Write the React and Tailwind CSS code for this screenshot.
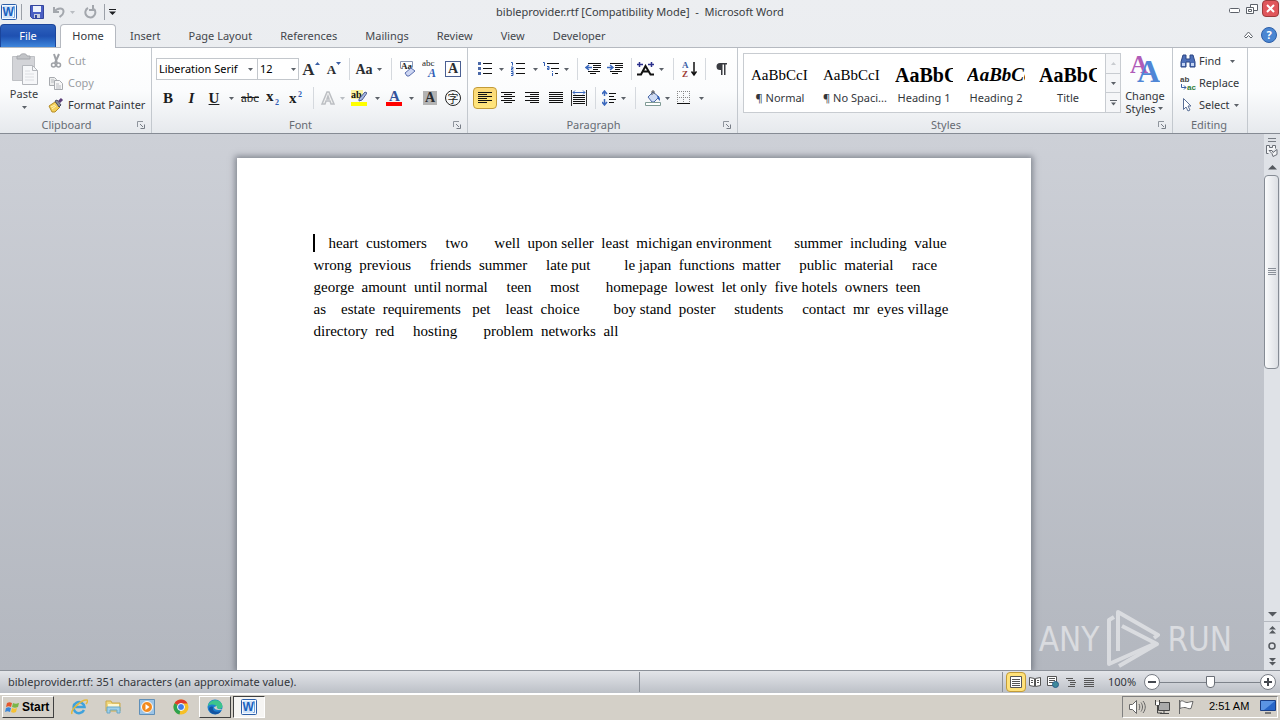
import { clsx } from 'clsx';

const LINES = [
  '    heart  customers     two       well  upon seller  least  michigan environment      summer  including  value',
  'wrong  previous     friends  summer     late put         le japan  functions  matter     public  material     race',
  'george  amount  until normal     teen     most       homepage  lowest  let only  five hotels  owners  teen',
  'as    estate  requirements   pet    least  choice         boy stand  poster     students     contact  mr  eyes village',
  'directory  red     hosting       problem  networks  all',
];

const TABS = ['Insert', 'Page Layout', 'References', 'Mailings', 'Review', 'View', 'Developer'];

const STYLES = [
  { name: '¶ Normal', sample: 'AaBbCcI', look: 'text-[15px]' },
  { name: '¶ No Spaci...', sample: 'AaBbCcI', look: 'text-[15px]' },
  { name: 'Heading 1', sample: 'AaBbC', look: 'text-[20px] font-bold' },
  { name: 'Heading 2', sample: 'AaBbCc', look: 'text-[19px] font-bold italic' },
  { name: 'Title', sample: 'AaBbC', look: 'text-[20px] font-bold' },
];

const SERIF = "font-['Liberation_Serif',serif]";

// ---- small building blocks ----

const Svg = ({ w = 16, h = 16, children, className }) => (
  <svg width={w} height={h} viewBox={`0 0 ${w} ${h}`} fill="none" className={clsx('shrink-0', className)} aria-hidden="true">
    {children}
  </svg>
);

const Glyph = ({ x, y, size, fill, italic, plain, sans, children }) => (
  <text
    x={x}
    y={y}
    fontSize={size}
    fontFamily={sans ? 'Liberation Sans' : 'Liberation Serif'}
    fontWeight={plain ? 'normal' : 'bold'}
    fontStyle={italic ? 'italic' : 'normal'}
    fill={fill}
  >
    {children}
  </text>
);

const Caret = ({ className = 'w-2', faded }) => (
  <span className={clsx('flex shrink-0 justify-center', className)}>
    <Svg w={5} h={3}><path d="M0 0h5L2.5 3z" fill={faded ? '#b9bdc2' : '#5c6168'} /></Svg>
  </span>
);

const Sep = ({ className = 'w-2' }) => (
  <span className={clsx('flex h-[22px] shrink-0 justify-center', className)}>
    <span className="w-px bg-[#d5d9de]" />
  </span>
);

const Tool = ({ label, className, children }) => (
  <button type="button" aria-label={label} className={clsx('flex h-[22px] shrink-0 items-center justify-center', className)}>
    {children}
  </button>
);

const Group = ({ name, launcher, className, children }) => (
  <section className={clsx('flex shrink-0 flex-col border-r border-[#c3c8ce]', className)}>
    <div className="h-[69px]">{children}</div>
    <div className="flex h-4 items-center pr-0.5">
      <h2 className="flex-1 text-center text-[#666b73]">{name}</h2>
      {launcher && (
        <button type="button" aria-label={`${name} options`} className="flex p-1">
          <Svg w={8} h={8}>
            <path d="M.5 6V.5H6" stroke="#8f959d" />
            <path d="M3 3l3 3M7.5 3.5v4h-4" stroke="#777d86" />
          </Svg>
        </button>
      )}
    </div>
  </section>
);

const WordIcon = () => (
  <Svg>
    <rect x=".5" y=".5" width="15" height="15" rx="1" fill="#f4f9ff" stroke="#2b5ea8" />
    <path d="M2 2h10v12H2z" fill="#cfe2f8" />
    <path d="M12 2.500h1.500v11H12" stroke="#7aa3d8" />
    <Glyph x="1.500" y="12" size="12" fill="#1b62c0" sans>W</Glyph>
  </Svg>
);

// ---- title bar and tabs ----

const TitleBar = () => (
  <header className="relative flex h-6 items-center justify-between">
    <div className="flex items-center pl-px">
      <WordIcon />
      <span className="mx-1 h-4 w-px bg-[#9ba0a8]" />
      <button type="button" aria-label="Save" className="ml-1 flex">
        <Svg w={14} h={14}>
          <path d="M.5.5h13v13h-11l-2-2z" fill="#4a5fc4" stroke="#34459c" />
          <path d="M3 1h8v6H3z" fill="#eef2fb" />
          <path d="M4 9h6v4H4z" fill="#c8cede" />
          <path d="M5 10h2v3H5z" fill="#34459c" />
        </Svg>
      </button>
      <button type="button" aria-label="Undo" className="ml-2 flex">
        <Svg w={14} h={14}>
          <path d="M2 2v5h5" stroke="#a3a7ad" strokeWidth="2" />
          <path d="M2.500 6.500C5 3 12 2 11.500 7c-.3 3-2.500 4-4 5" stroke="#a3a7ad" strokeWidth="2" />
        </Svg>
      </button>
      <Caret className="w-3" faded />
      <button type="button" aria-label="Redo" className="ml-1.5 flex">
        <Svg w={14} h={14}>
          <path d="M4 3a5 5 0 1 0 6 1" stroke="#a3a7ad" strokeWidth="2" />
          <path d="M9 0v5H5" stroke="#a3a7ad" strokeWidth="2" />
        </Svg>
      </button>
      <span className="ml-1.5 h-4 w-px bg-[#9ba0a8]" />
      <button type="button" aria-label="Customize toolbar" className="ml-1 flex">
        <Svg w={7} h={6}><path d="M0 0h7v1H0zM0 2.500h7L3.500 6z" fill="#1d1f22" /></Svg>
      </button>
    </div>
    <h1 className="pointer-events-none absolute inset-x-0 text-center whitespace-pre text-[#3a3d42]">
      {'bibleprovider.rtf [Compatibility Mode]  -  Microsoft Word'}
    </h1>
    <div className="flex items-center gap-1.5 self-start pr-px">
      <button type="button" aria-label="Minimize" className="flex">
        <Svg w={11} h={16}><rect x=".5" y="7.500" width="10" height="4" rx="1" fill="#fff" stroke="#5d626a" /></Svg>
      </button>
      <button type="button" aria-label="Restore" className="flex">
        <Svg w={12} h={16}>
          <path d="M4.500 6V3.500h7v6H8" fill="#fff" stroke="#5d626a" />
          <path d="M.5 6.500h7v6h-7z" fill="#fff" stroke="#5d626a" />
          <path d="M2.500 8.500h3v2h-3z" stroke="#5d626a" />
        </Svg>
      </button>
      <button type="button" aria-label="Close" className="-ml-0.5 flex h-[17px] w-[17px] items-center justify-center rounded-sm border border-[#9c3a3c] bg-[#e0565b]">
        <Svg w={9} h={9}><path d="M1 1l7 7M8 1L1 8" stroke="#fff" strokeWidth="2" /></Svg>
      </button>
    </div>
  </header>
);

const TabStrip = () => (
  <nav className="flex h-6 items-end border-b border-[#b5b9c0]">
    <button type="button" className="h-[23px] w-14 rounded-t-sm border border-b-0 border-[#1b459b] bg-linear-to-b from-[#2f62bd] via-[#1e50b1] to-[#3f86dc] text-white">File</button>
    <button type="button" className="z-10 -mb-px ml-1 h-6 w-14 rounded-t-sm border border-b-0 border-[#b5b9c0] bg-white text-[#33363b]">Home</button>
    {TABS.map((tab) => (
      <button key={tab} type="button" className="h-[23px] px-[14px] pt-0.5 text-[#44474d]">{tab}</button>
    ))}
    <span className="flex-1" />
    <button type="button" aria-label="Collapse ribbon" className="mb-2 flex">
      <Svg w={9} h={8}><path d="M.5 5.500l4-4.500 4 4.500-1.500 1.500-2.500-2.500L2 7z" fill="#fff" stroke="#5d626a" /></Svg>
    </button>
    <button type="button" aria-label="Help" className="mr-[3px] mb-1 ml-2 flex h-4 w-4 items-center justify-center rounded-full border border-[#2e5fa8] bg-[#4a86d2] font-bold text-white">?</button>
  </nav>
);

// ---- ribbon groups ----

const Clipboard = () => (
  <Group name="Clipboard" launcher className="w-[152px]">
    <div className="flex pt-0.5">
      <button type="button" className="flex w-12 flex-col items-center pt-0.5 text-[#3a3d42]">
        <Svg w={30} h={34}>
          <path d="M3.500 4.500h22v24h-22z" fill="#d3d4d8" stroke="#bfc1c5" />
          <path d="M8 7V4h3c0-3 7-3 7 0h3v3z" fill="#c2c4c8" stroke="#a5a7ac" />
          <path d="M13.500 13.500h10l5 5v14h-15z" fill="#f6f7f9" stroke="#b4b7bc" />
          <path d="M23.500 13.500v5h5" stroke="#b4b7bc" />
          <path d="M16 19h5M16 22h9M16 25h9M16 28h9" stroke="#dcdee2" />
        </Svg>
        <span className="h-4 leading-4">Paste</span>
        <Caret className="mt-1 w-2" />
      </button>
      <div className="flex flex-col text-[#9a9da2]">
        <button type="button" className="flex h-[22px] items-center gap-1">
          <Svg>
            <path d="M6 1l3 9M11 1l-4 9" stroke="#9ea1a6" strokeWidth="2" />
            <circle cx="5.500" cy="12" r="2" stroke="#9ea1a6" strokeWidth="1.500" />
            <circle cx="10.500" cy="12" r="2" stroke="#9ea1a6" strokeWidth="1.500" />
          </Svg>
          Cut
        </button>
        <button type="button" className="flex h-[22px] items-center gap-1">
          <Svg>
            <path d="M1.500 2.500h5l2 2v6h-7z" fill="#eceded" stroke="#a7aaaf" />
            <path d="M6.500 5.500h5l3 3v6h-8z" fill="#f7f7f8" stroke="#a7aaaf" />
            <path d="M3 5h3M3 7h3M8 9h3M8 11h5M8 13h5" stroke="#b7babf" />
          </Svg>
          Copy
        </button>
        <button type="button" className="flex h-[22px] items-center gap-1 text-[#33363b]">
          <Svg>
            <path d="M1 9l6-4 5 5-5 5H4z" fill="#f3cf58" stroke="#b58d28" />
            <path d="M3 10l4-2M4 12l4-3" stroke="#fff3b8" />
            <path d="M7 4l2-1 4 5-2 2z" fill="#8b8fa0" stroke="#4b4f63" />
            <path d="M11 5l3-3" stroke="#5b3e78" strokeWidth="3" />
          </Svg>
          Format Painter
        </button>
      </div>
    </div>
  </Group>
);

const LetterA = ({ size, className }) => (
  <span className={clsx(SERIF, 'leading-none font-bold text-[#2b2d31]', size, className)}>A</span>
);

const Font = () => (
  <Group name="Font" launcher className="w-[316px]">
    <div className="flex flex-col gap-[7px] pt-[10px] pl-1">
      <div className="flex items-center">
        <label className="relative flex items-center">
          <span className="sr-only">Font name</span>
          <select className="h-[22px] w-[102px] appearance-none border border-[#c3c7cc] bg-white pl-0.5 leading-5 text-black">
            <option>Liberation Serif</option>
          </select>
          <Caret className="pointer-events-none absolute right-1 w-2" />
        </label>
        <label className="relative -ml-px flex items-center">
          <span className="sr-only">Font size</span>
          <select className="h-[22px] w-[42px] appearance-none border border-[#c3c7cc] bg-white pl-0.5 leading-5 text-black">
            <option>12</option>
          </select>
          <Caret className="pointer-events-none absolute right-0.5 w-2" />
        </label>
        <Tool label="Grow font" className="w-6">
          <LetterA size="text-[17px]" />
          <Svg w={5} h={14}><path d="M2.500 0L5 3H0z" fill="#3a5fa5" /></Svg>
        </Tool>
        <Tool label="Shrink font" className="w-[22px]">
          <LetterA size="text-[13px]" />
          <Svg w={5} h={14}><path d="M0 0h5L2.500 3z" fill="#3a5fa5" /></Svg>
        </Tool>
        <Sep />
        <Tool label="Change case" className="w-[22px]">
          <span className={clsx(SERIF, 'text-[14px] font-bold text-[#2b2d31]')}>Aa</span>
        </Tool>
        <Caret />
        <Sep className="w-4" />
        <Tool label="Clear formatting" className="w-[18px]">
          <Svg w={18} h={18}>
            <path d="M1.500 8.500v-7h12v6" stroke="#8a96b4" />
            <Glyph x="2" y="9" size="9" fill="#222">Aa</Glyph>
            <path d="M6 13l6-5 4 3-6 5H8z" fill="#cdd6f3" stroke="#5b6fae" />
          </Svg>
        </Tool>
        <Tool label="Phonetic guide" className="w-[26px]">
          <Svg w={16} h={18}>
            <Glyph x="0" y="6" size="9" fill="#222" plain>abc</Glyph>
            <Glyph x="6" y="17" size="12" fill="#2f5db5" italic>A</Glyph>
          </Svg>
        </Tool>
        <Tool label="Character border" className="w-5">
          <span className="flex h-4 w-4 items-center justify-center border border-[#4a5f92]"><LetterA size="text-[14px]" /></span>
        </Tool>
      </div>
      <div className={clsx('flex items-center text-[15px] text-[#1c1d20]', SERIF)}>
        <Tool label="Bold" className="w-6 font-bold">B</Tool>
        <Tool label="Italic" className="w-[23px] font-bold italic">I</Tool>
        <Tool label="Underline" className="w-[22px] font-bold underline">U</Tool>
        <Caret className="w-3" />
        <Tool label="Strikethrough" className="w-[26px] text-[13px] line-through">abc</Tool>
        <Tool label="Subscript" className="w-5">
          <Svg w={14} h={14}>
            <Glyph x="0" y="10" size="15" fill="#1c1d20">x</Glyph>
            <Glyph x="9" y="14" size="8" fill="#2f5db5">2</Glyph>
          </Svg>
        </Tool>
        <Tool label="Superscript" className="w-[26px]">
          <Svg w={14} h={14}>
            <Glyph x="0" y="12" size="15" fill="#1c1d20">x</Glyph>
            <Glyph x="9" y="6" size="8" fill="#2f5db5">2</Glyph>
          </Svg>
        </Tool>
        <Sep />
        <Tool label="Text effects" className="w-[22px]">
          <Svg><path d="M2 14L7 2h2l5 12h-3l-1-3H6l-1 3zM7 9h2L8 6z" fill="#f2f2f2" stroke="#bcbfc3" strokeWidth="1.500" /></Svg>
        </Tool>
        <Caret className="w-1.5" faded />
        <Tool label="Highlight color" className="w-7">
          <Svg>
            <path d="M0 0h12v9H0z" fill="#fbf3a0" />
            <Glyph x="0" y="8" size="10" fill="#111">ab</Glyph>
            <path d="M8 9l6-7 2 1-5 7-3 1z" fill="#a9b9e4" stroke="#4b5c8f" />
            <path d="M0 12h16v4H0z" fill="#ff0" />
          </Svg>
        </Tool>
        <Caret />
        <Tool label="Font color" className="w-[26px]">
          <Svg>
            <Glyph x="3" y="11" size="15" fill="#33539b">A</Glyph>
            <path d="M0 12h16v4H0z" fill="#f00" />
          </Svg>
        </Tool>
        <Caret />
        <Tool label="Character shading" className="w-[30px]">
          <span className="flex h-[14px] w-[14px] items-center justify-center bg-[#b4b4b4]"><LetterA size="text-[14px]" /></span>
        </Tool>
        <Tool label="Enclose characters" className="w-4">
          <span className="flex h-4 w-4 items-center justify-center rounded-full border border-[#222] font-['Noto_Sans_CJK_SC',sans-serif] text-[11px] leading-none">字</span>
        </Tool>
      </div>
    </div>
  </Group>
);

const Rows = ({ d }) => <Svg w={14} h={14}><path d={d} stroke="#111" /></Svg>;

const Paragraph = () => (
  <Group name="Paragraph" launcher className="w-[270px]">
    <div className="flex flex-col gap-[7px] pt-[10px] pl-[5px]">
      <div className="flex items-center">
        <Tool label="Bullets" className="w-6">
          <Svg w={14} h={14}>
            <path d="M5 1.500h9M5 6.500h9M5 11.500h9" stroke="#111" />
            <path d="M0 0h3v3H0zM0 5h3v3H0zM0 10h3v3H0z" fill="#4a68a8" />
          </Svg>
        </Tool>
        <Caret />
        <Tool label="Numbering" className="w-[26px]">
          <Svg w={14} h={14}>
            <path d="M5 1.500h9M5 6.500h9M5 11.500h9" stroke="#111" />
            <path d="M0 .5h1.500v3M0 5h2v1.500H.5V8H2.500M0 9.500h2v4H0M0 11.500h2" stroke="#2f5db5" />
          </Svg>
        </Tool>
        <Caret />
        <Tool label="Multilevel list" className="w-6">
          <Svg w={16} h={14}>
            <path d="M4 1.500h12M8 6.500h8M12 11.500h3" stroke="#111" />
            <path d="M0 .5h1.500V4M4 4.500h2v3H4.500V6H6M9.500 9v1M9.500 11v3" stroke="#2f5db5" />
          </Svg>
        </Tool>
        <Caret className="w-1.5" />
        <Sep className="w-4" />
        <Tool label="Decrease indent" className="w-4">
          <Svg w={16} h={14}>
            <path d="M3 1.500h13M8 3.500h8M8 5.500h8M8 7.500h5M3 9.500h12M5 11.500h6" stroke="#111" />
            <path d="M7 5.500H1M4 3L1 5.500 4 8" stroke="#3a68bd" strokeWidth="1.500" />
          </Svg>
        </Tool>
        <Tool label="Increase indent" className="w-7">
          <Svg w={16} h={14}>
            <path d="M3 1.500h13M8 3.500h8M8 5.500h8M8 7.500h5M3 9.500h12M5 11.500h6" stroke="#111" />
            <path d="M0 5.500h6M3 3l3 2.500L3 8" stroke="#3a68bd" strokeWidth="1.500" />
          </Svg>
        </Tool>
        <Sep className="w-1" />
        <Tool label="Asian layout" className="w-6">
          <Svg w={17} h={14}>
            <path d="M0 12.500h4L8.500 4l5 8.500H17M5.500 9.500h6" stroke="#111" strokeWidth="2" />
            <path d="M0 2.500h6M11 2.500h6M2.500 0v5M14.500 0v5" stroke="#2a2f8c" strokeWidth="1.500" />
          </Svg>
        </Tool>
        <Caret />
        <Sep className="w-4" />
        <Tool label="Sort" className="w-4">
          <Svg w={15} h={16}>
            <Glyph x="0" y="7" size="9" fill="#3a5fa5">A</Glyph>
            <Glyph x="0" y="16" size="9" fill="#9c3a32">Z</Glyph>
            <path d="M12 1v12M9.500 10.500L12 14l2.500-3.500" stroke="#111" strokeWidth="1.500" />
          </Svg>
        </Tool>
        <Sep className="w-4" />
        <Tool label="Show marks" className="w-4">
          <Svg w={11} h={13}><path d="M11 0H4a3.500 3.500 0 0 0 0 7h1v5h1.500V1.500H8V12h1.500V1.500H11z" fill="#3a3c41" /></Svg>
        </Tool>
      </div>
      <div className="flex items-center">
        <Tool label="Align left" className="w-6 rounded-sm border border-[#c29b38] bg-linear-to-b from-[#fbd878] to-[#ffe67c]">
          <Rows d="M0 1.500h14M0 3.500h9M0 5.500h14M0 7.500h9M0 9.500h14M0 11.500h9" />
        </Tool>
        <Tool label="Center" className="w-[22px]"><Rows d="M0 1.500h14M3 3.500h8M0 5.500h14M3 7.500h8M0 9.500h14M3 11.500h8" /></Tool>
        <Tool label="Align right" className="w-[26px]"><Rows d="M0 1.500h14M5 3.500h9M0 5.500h14M5 7.500h9M0 9.500h14M5 11.500h9" /></Tool>
        <Tool label="Justify" className="w-[22px]"><Rows d="M0 1.500h14M0 3.500h14M0 5.500h14M0 7.500h14M0 9.500h14M0 11.500h14" /></Tool>
        <Tool label="Distribute" className="w-6">
          <Svg>
            <path d="M.5 0v16M15.500 0v16" stroke="#333" />
            <path d="M2 5.500h12M2 7.500h12M2 9.500h12M2 11.500h12M2 13.500h12" stroke="#111" />
            <path d="M2 2.500h12M4 .5l-2 2 2 2M12 .5l2 2-2 2" stroke="#3a68bd" />
          </Svg>
        </Tool>
        <Sep />
        <Tool label="Line spacing" className="w-5">
          <Svg w={14} h={16}>
            <path d="M7 3.500h7M7 6.500h5M7 9.500h7M7 12.500h5" stroke="#111" />
            <path d="M2.500 1v5M0 4l2.500-3L5 4M2.500 9v5M0 12l2.500 3L5 12" stroke="#3a68bd" strokeWidth="1.500" />
          </Svg>
        </Tool>
        <Caret />
        <Sep className="w-4" />
        <Tool label="Shading" className="w-5">
          <Svg>
            <path d="M3 7l5-5 6 5-5 5H7z" fill="#cfdcf4" stroke="#4a68a8" />
            <path d="M7 5V1h2v3" stroke="#555" />
            <path d="M12 6c3 0 3 3 3 5l-2-2z" fill="#2f5db5" />
            <path d="M.5 12.500h15v3H.5z" fill="#fff" stroke="#7f9a94" />
          </Svg>
        </Tool>
        <Caret />
        <Tool label="Borders" className="w-[26px]">
          <Svg w={14} h={14}>
            <path d="M.5 0v12M6.500 0v12M12.500 0v12M0 .5h13M0 6.500h13" stroke="#888" strokeDasharray="1 1" />
            <path d="M0 12.500h13" stroke="#111" />
          </Svg>
        </Tool>
        <Caret />
      </div>
    </div>
  </Group>
);

const Styles = () => (
  <Group name="Styles" launcher className="w-[435px]">
    <div className="flex items-start pt-[5px] pl-[5px]">
      <div className="flex h-[60px] border border-[#c8ccd1] bg-white">
        <div className="flex w-[361px]">
          {STYLES.map(({ name, sample, look }) => (
            <button key={name} type="button" className="flex w-[72px] flex-col px-[7px] pt-[9px]">
              <span className={clsx(SERIF, 'h-6 w-full overflow-hidden text-left leading-6 whitespace-nowrap text-black', look)}>{sample}</span>
              <span className="h-[22px] w-full text-center leading-[22px] whitespace-nowrap text-[#33363b]">{name}</span>
            </button>
          ))}
        </div>
        <div className="flex w-[15px] flex-col divide-y divide-[#c8ccd1] border-l border-[#c8ccd1] bg-[#f5f6f8]">
          <button type="button" aria-label="Previous styles" className="flex flex-1 items-center justify-center">
            <Svg w={5} h={3}><path d="M0 3h5L2.500 0z" fill="#c9ccd0" /></Svg>
          </button>
          <button type="button" aria-label="Next styles" className="flex flex-1 items-center justify-center">
            <Caret />
          </button>
          <button type="button" aria-label="More styles" className="flex flex-1 items-center justify-center">
            <Svg w={7} h={6}><path d="M0 0h7v1H0zM1 2.500h5L3.500 5.500z" fill="#5c6168" /></Svg>
          </button>
        </div>
      </div>
      <button type="button" className="flex w-12 flex-col items-center text-[#33363b]">
        <Svg w={30} h={30}>
          <Glyph x="0" y="20" size="25" fill="#b05cb8">A</Glyph>
          <Glyph x="7" y="29" size="32" fill="#4f86d6">A</Glyph>
        </Svg>
        <span className="mt-1.5 leading-[13px]">Change</span>
        <span className="flex items-center leading-[13px]">Styles<Caret className="ml-px w-2" /></span>
      </button>
    </div>
  </Group>
);

const Editing = () => (
  <Group name="Editing" className="w-[75px]">
    <div className="flex flex-col items-start pt-0.5 pl-[7px] text-[#33363b]">
      <button type="button" className="flex h-[22px] items-center gap-[3px]">
        <Svg>
          <path d="M3 2h3v4h4V2h3l2 7v5h-5V9H6v5H1V9z" fill="#4d6fb8" stroke="#2c4684" />
          <path d="M2 10h3v3H2zM11 10h3v3h-3z" fill="#c4d5f4" />
        </Svg>
        Find<Caret className="ml-1 w-2" />
      </button>
      <button type="button" className="flex h-[22px] items-center gap-[3px]">
        <Svg>
          <Glyph x="0" y="7" size="8" fill="#444" sans>ab</Glyph>
          <path d="M1.500 9v3.500H6M4 10.500l2 2-2 2" stroke="#3a5fa5" />
          <Glyph x="7" y="15" size="8" fill="#2e7d38" sans>ac</Glyph>
        </Svg>
        Replace
      </button>
      <button type="button" className="flex h-[22px] items-center gap-[3px]">
        <Svg><path d="M3.500 1.500v11l2.500-2.500 2 4 2-1-2-4h3z" fill="#fff" stroke="#5a6f96" /></Svg>
        Select<Caret />
      </button>
    </div>
  </Group>
);

// ---- document area ----

const ArrowKey = ({ label, d, className }) => (
  <button type="button" aria-label={label} className={clsx('flex w-4 items-center justify-center', className)}>
    <Svg w={9} h={8}><path d={d} fill="#55595f" /></Svg>
  </button>
);

const ScrollBar = () => (
  <div className="flex w-4 shrink-0 flex-col items-center bg-[#dfe2e7]">
    <span className="mt-1 h-1 w-2 border-y border-[#777c84]" />
    <button type="button" aria-label="Ruler" className="mt-px flex h-4 items-center">
      <Svg w={12} h={12}>
        <path d="M2.500 8.500h-2v-8h3v2h3v-2h3v3" fill="#f4f5f7" stroke="#6a6f77" />
        <path d="M3 5.500h3l1 2 4-3v5l-4 2-1-3z" fill="#f4f5f7" stroke="#6a6f77" />
      </Svg>
    </button>
    <ArrowKey label="Scroll up" className="h-4" d="M4.500 2L9 6.500H0z" />
    <div className="flex min-h-0 w-full flex-1 flex-col">
      <div className="flex h-[45%] w-[15px] items-center justify-center rounded-sm border border-[#868c95] bg-linear-to-r from-[#fafbfc] to-[#dcdfe4]">
        <Svg w={8} h={8}><path d="M0 .5h8M0 2.500h8M0 4.500h8M0 6.500h8" stroke="#8a9099" /></Svg>
      </div>
    </div>
    <ArrowKey label="Scroll down" className="h-4 border-b border-[#b5b9c0]" d="M0 2h9L4.500 6.500z" />
    <ArrowKey label="Previous page" className="h-4" d="M4.500 0L8 3.500H1zM4.500 4L8 7.500H1z" />
    <button type="button" aria-label="Browse object" className="flex h-4 items-center">
      <Svg w={8} h={8}><circle cx="4" cy="4" r="3" stroke="#55595f" strokeWidth="1.500" /></Svg>
    </button>
    <ArrowKey label="Next page" className="h-4" d="M1 0h7L4.500 3.500zM1 4h7L4.500 7.500z" />
  </div>
);

const Watermark = () => (
  <div className="pointer-events-none absolute right-12 bottom-0 flex items-center gap-1.5 font-['DejaVu_Sans_Condensed','DejaVu_Sans',sans-serif] text-[33px] leading-none text-white/50">
    <span>ANY</span>
    <Svg w={56} h={62} className="opacity-50">
      <g stroke="#fff" strokeWidth="4" strokeLinejoin="round">
        <path d="M13 43V4l40 23-4 3" />
        <path d="M9 9l-5 3v44l45-20" />
        <path d="M17 18l35 18-38 22" />
      </g>
    </Svg>
    <span>RUN</span>
  </div>
);

const Workspace = () => (
  <main className="relative flex min-h-0 flex-1 bg-linear-to-b from-[#cdd0d7] to-[#b3b7bf]">
    <div className="flex min-w-0 flex-1 justify-center overflow-hidden pt-6 pl-[3px]">
      <article className={clsx('w-[794px] bg-white pt-[74px] pl-[77px] text-[15px] leading-[22px] text-black shadow-[0_0_6px_2px_rgba(70,75,85,0.55)]', SERIF)}>
        {LINES.map((line, i) => (
          <p key={line} className="relative whitespace-pre">
            {i === 0 && <span className="absolute top-0.5 -left-px h-[18px] w-0.5 bg-black" />}
            {line}
          </p>
        ))}
      </article>
    </div>
    <ScrollBar />
    <Watermark />
  </main>
);

// ---- status bar and taskbar ----

const StatusBar = () => (
  <footer className="flex h-[23px] shrink-0 items-center border-t border-[#8c9199] bg-linear-to-b from-[#e3e5e9] to-[#bcc0c7] text-[#33363b]">
    <p className="w-1/2 border-r border-[#8c9199] pl-2 leading-5">bibleprovider.rtf: 351 characters (an approximate value).</p>
    <span className="flex-1" />
    <span className="h-5 w-px bg-[#8c9199]" />
    <div className="ml-[3px] flex items-center">
      <button type="button" aria-label="Print layout" className="flex h-5 w-5 items-center justify-center rounded-sm border border-[#c29b38] bg-[#ffe27a]">
        <Svg w={12} h={12}><path d="M.5.5h11v11H.5z" fill="#fff" stroke="#555" /><path d="M2 3.500h8M2 5.500h8M2 7.500h8M2 9.500h8" stroke="#555" /></Svg>
      </button>
      <Tool label="Full screen reading" className="w-[18px]">
        <Svg w={12} h={12}><path d="M.5 1.500l5 1v8l-5-1zM11.500 1.500l-5 1v8l5-1z" fill="#fff" stroke="#555" /><path d="M2 4.500h2M2 6.500h2M8 4.500h2M8 6.500h2" stroke="#555" /></Svg>
      </Tool>
      <Tool label="Web layout" className="w-[18px]">
        <Svg w={12} h={12}><path d="M.5.500h9v9h-9z" fill="#fff" stroke="#555" /><path d="M2 2.500h6M2 4.500h6M2 6.500h4" stroke="#555" /><circle cx="8.500" cy="8.500" r="3" fill="#3f8a9a" stroke="#2a5f8c" /></Svg>
      </Tool>
      <Tool label="Outline" className="w-[18px]">
        <Svg w={10} h={10}><path d="M0 1.500h7M2 3.500h7M4 5.500h6M4 7.500h5M2 9.500h7" stroke="#555" /></Svg>
      </Tool>
      <Tool label="Draft" className="w-[18px]">
        <Svg w={10} h={10}><path d="M0 1.500h10M0 3.500h10M0 5.500h10M0 7.500h10M0 9.500h10" stroke="#555" /></Svg>
      </Tool>
    </div>
    <span className="ml-2.5 w-9">100%</span>
    <button type="button" aria-label="Zoom out" className="flex h-4 w-4 items-center justify-center rounded-full border border-[#777c84] bg-white">
      <Svg w={8} h={8}><path d="M0 4h8" stroke="#44484f" strokeWidth="2" /></Svg>
    </button>
    <input
      type="range"
      aria-label="Zoom"
      min="0"
      max="100"
      defaultValue="50"
      className="h-4 w-[100px] appearance-none bg-[linear-gradient(#7d828a,#7d828a)] bg-size-[100%_1px] bg-center bg-no-repeat [&::-webkit-slider-thumb]:h-3 [&::-webkit-slider-thumb]:w-[9px] [&::-webkit-slider-thumb]:appearance-none [&::-webkit-slider-thumb]:rounded-b-[4px] [&::-webkit-slider-thumb]:border [&::-webkit-slider-thumb]:border-[#6a6f77] [&::-webkit-slider-thumb]:bg-white"
    />
    <button type="button" aria-label="Zoom in" className="mr-1 flex h-4 w-4 items-center justify-center rounded-full border border-[#777c84] bg-white">
      <Svg w={8} h={8}><path d="M0 4h8M4 0v8" stroke="#44484f" strokeWidth="2" /></Svg>
    </button>
  </footer>
);

const Launch = ({ label, className, children }) => (
  <button type="button" aria-label={label} className={clsx('flex h-[22px] items-center justify-center', className)}>{children}</button>
);

const TaskBar = () => (
  <footer className="flex h-[27px] shrink-0 items-center border-t-2 border-white bg-[#d4d0c8] pr-0.5 pb-0.5 pl-0.5">
    <button type="button" className="flex h-[22px] w-[52px] items-center gap-0.5 border border-t-white border-r-[#404040] border-b-[#404040] border-l-white pl-0.5 font-['Liberation_Sans',sans-serif] text-[12px] font-bold text-black">
      <Svg w={15} h={14}>
        <path d="M2 3c2-1 3-1 5 0l-1 4c-2-1-3-1-5 0z" fill="#e4572e" />
        <path d="M8 3c2 1 3 1 6 0l-1 4c-2 1-4 1-6 0z" fill="#7ab648" />
        <path d="M1 8c2-1 3-1 5 0l-1 4c-2-1-3-1-5 0z" fill="#3a86d8" />
        <path d="M7 8c2 1 3 1 5 0l-1 4c-2 1-3 1-5 0z" fill="#f6c131" />
      </Svg>
      Start
    </button>
    <Launch label="Internet Explorer" className="ml-[9px] w-8">
      <Svg w={18} h={18}>
        <path d="M14 12a5.500 5.500 0 1 1 .5-3H4" stroke="#3fa2dc" strokeWidth="2.500" />
        <path d="M2 16C0 12 12 1 17 2c1 1 0 3-1 4" stroke="#e5b93a" strokeWidth="1.500" />
      </Svg>
    </Launch>
    <Launch label="Explorer" className="w-9">
      <Svg>
        <path d="M1 2h5l1 2h8v8H1z" fill="#f0d77c" stroke="#cba94a" />
        <path d="M3 5h11v3H3z" fill="#fff7cf" />
        <path d="M2 8h13v6h-3v-3H5v3H2z" fill="#9fd0ea" stroke="#68a7c8" />
      </Svg>
    </Launch>
    <Launch label="Media Player" className="w-8">
      <Svg>
        <path d="M.5.500h15v15H.5z" fill="#9cc4e6" stroke="#5f8fb8" />
        <circle cx="8" cy="8" r="5.500" fill="#f28a1e" stroke="#fff" />
        <path d="M6.500 5v6l4-3z" fill="#fff" />
      </Svg>
    </Launch>
    <Launch label="Chrome" className="w-9">
      <Svg>
        <circle cx="8" cy="8" r="7.500" fill="#f6c026" />
        <path d="M8 8L1.500 4.200A7.500 7.500 0 0 1 14.600 4.500H8z" fill="#de3a2c" />
        <path d="M8 8l-1.500 7.400A7.500 7.500 0 0 1 1.500 4.200z" fill="#2ea24e" />
        <circle cx="8" cy="8" r="3.500" fill="#3f7ee8" stroke="#fff" />
      </Svg>
    </Launch>
    <Launch label="Edge" className="w-8 border border-t-white border-r-[#404040] border-b-[#404040] border-l-white">
      <Svg>
        <circle cx="8" cy="8" r="7.500" fill="#1c7fd0" />
        <path d="M1 7C2 0 14-1 15.500 7c0 3-4 4-6 2 1-3-4-5-8.500-2z" fill="#3dc48c" />
        <path d="M6 8c-1 4 3 6 8 4-3 5-11 4-12-2 0-2 2-3 4-2z" fill="#1453a0" />
        <path d="M7 8c0 2 2 3 5 3 2 0 3 0 3-1-4 1-6-1-5-3z" fill="#d4d0c8" />
      </Svg>
    </Launch>
    <Launch label="Word" className="ml-0.5 w-8 border border-t-[#404040] border-r-white border-b-white border-l-[#404040] bg-[#f6f5f3]">
      <WordIcon />
    </Launch>
    <span className="flex-1" />
    <div className="flex h-[22px] items-center border border-t-[#808080] border-r-white border-b-white border-l-[#808080] pl-1.5 text-black">
      <Svg w={17}>
        <path d="M.5 5.500h3l4-4v13l-4-4h-3z" fill="#fff" stroke="#666" />
        <path d="M10 5c1 2 1 4 0 6M12 3.500c2 3 2 6 0 9M14 2c3 4 3 8 0 12" stroke="#666" />
      </Svg>
      <Svg className="ml-2">
        <path d="M4.500 3.500h11v8h-11z" fill="#aaa" stroke="#444" />
        <path d="M6 14.500h9M10 12v2M1.500 1v5h4V1M3.500 6v8H8" stroke="#444" />
        <path d="M2 3h3v3H2z" fill="#fff" />
      </Svg>
      <Svg className="ml-2">
        <path d="M1.500 1v14M2 2.500c3-2 4 1 7 1 2 0 3-1 6-1l-2 7c-3 1-4-1-6-1s-3 0-5 1z" fill="#fff" stroke="#666" />
      </Svg>
      <time className="ml-[15px] w-[51px] font-['Liberation_Sans',sans-serif] text-[11px] whitespace-nowrap">2:51 AM</time>
      <Svg className="mr-px">
        <path d="M.5 1.500h15v10H.5z" fill="#2766c8" stroke="#1a3f86" />
        <path d="M1 2h14L4 11H1z" fill="#5b95e4" />
        <path d="M5 14h6" stroke="#777" strokeWidth="2" />
      </Svg>
    </div>
  </footer>
);

export default function App() {
  return (
    <div className="flex h-screen flex-col overflow-hidden bg-linear-to-b from-[#eceef1] to-[#dfe2e6] font-['Noto_Sans',sans-serif] text-[11px]">
      <TitleBar />
      <TabStrip />
      <div className="flex h-[86px] shrink-0 border-b border-[#868b94] bg-linear-to-b from-white via-[#fbfcfd] to-[#e6e9ed]">
        <Clipboard />
        <Font />
        <Paragraph />
        <Styles />
        <Editing />
      </div>
      <Workspace />
      <StatusBar />
      <TaskBar />
    </div>
  );
}
